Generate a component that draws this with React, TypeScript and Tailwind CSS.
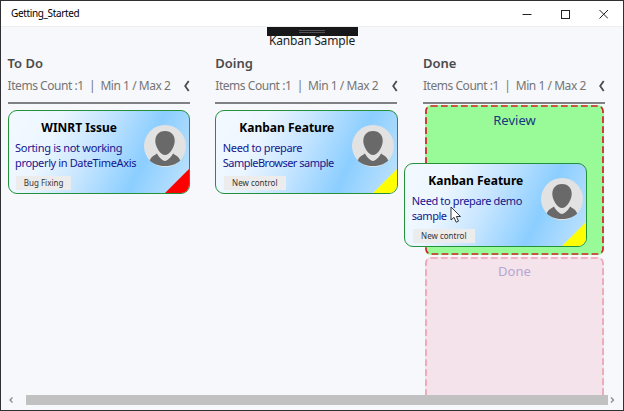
import type { ReactNode } from "react";

function Chevron() {
  return (
    <svg width="7" height="12" viewBox="0 0 7 12" fill="none" stroke="#4a4a4a" strokeWidth="1.8">
      <path d="M5.700 1 L2.200 6 L5.700 11" />
    </svg>
  );
}

function Avatar() {
  return (
    <svg width="42" height="42" viewBox="0 0 42 42" className="shrink-0">
      <circle cx="21" cy="21" r="21" fill="#e2e2e2" />
      <path d="M21 6 C14.5 6 11.3 10.5 11.3 16 C11.3 22 16.500 30 21 30 C25.500 30 30.7 22 30.7 16 C30.7 10.5 27.5 6 21 6Z" fill="#696969" />
      <path d="M12.800 28.500 C15 32 18.500 36 21 36 C23.500 36 27 32 29.200 28.500 C31.500 30.500 35 31.500 36.200 35.500 C32 39.500 27 41 21 41 C15 41 10 39.500 5.800 35.500 C7 31.500 10.500 30.500 12.800 28.500Z" fill="#696969" />
    </svg>
  );
}

type Line = { text: string; className: string };
type CardProps = { title: string; lines: Line[]; tag: string; tagClass: string; corner: string };

function Card({ title, lines, tag, tagClass, corner }: CardProps) {
  return (
    <div className="relative h-[84px] w-[182.500px] overflow-hidden rounded-[9px] border border-[#23913a] bg-[linear-gradient(115deg,#f4f9ff_0%,#ecf6ff_24%,#c6e5ff_46%,#8bceff_72%,#a0d6ff_82%,#c2e3fc_100%)]">
      <div className="flex justify-between pr-[3px] pl-[6.500px]">
        <div className="w-[128px]">
          <div className="mt-[8px] h-[18px] text-center text-[12px] leading-[18px] font-bold whitespace-nowrap text-black">{title}</div>
          <div className="mt-[2.500px] text-[11px] leading-[15px] whitespace-nowrap text-[#15158f]">
            {lines.map((l) => (
              <div key={l.text} className={l.className}>{l.text}</div>
            ))}
          </div>
          <div className={`mt-[6.500px] ml-px flex h-[14px] items-center justify-center bg-[#ececec] text-[8px] whitespace-nowrap text-[#333] ${tagClass}`}>{tag}</div>
        </div>
        <div className="pt-[14px]">
          <Avatar />
        </div>
      </div>
      <svg className="absolute right-[-1px] bottom-[-1px]" width="26" height="26" viewBox="0 0 26 26">
        <path d="M26 0 V26 H0Z" fill={corner} />
      </svg>
    </div>
  );
}

function Column({ title, children }: { title: string; children?: ReactNode }) {
  return (
    <section className="w-[182.500px] shrink-0">
      <h2 className="h-[20px] text-[13px] leading-[20px] font-semibold whitespace-nowrap text-[#4b4b4b]">{title}</h2>
      <div className="mt-[3px] flex h-[20px] items-center justify-between text-[#757575]">
        <span className="text-[12px] tracking-[-0.460px] whitespace-pre">{"Items Count :1  |  Min 1 / Max 2"}</span>
        <Chevron />
      </div>
      <div className="mt-[6px] h-[2px] w-[182px] bg-[#808184]" />
      {children}
    </section>
  );
}

function Zone({ label, className, stroke, height }: { label: string; className: string; stroke: string; height: number }) {
  return (
    <div className={`relative w-[179px] shrink-0 rounded-[6px] text-center text-[13px] leading-[20px] ${className}`}>
      <svg className="absolute top-0 left-0" width="179" height={height} fill="none">
        <rect x="1" y="1" width="177" height={height - 2} rx="5" stroke={stroke} strokeWidth="1.700" strokeDasharray="6.700 3.300" />
      </svg>
      {label}
    </div>
  );
}

export default function App() {
  return (
    <div className="flex h-[411px] w-[624px] flex-col overflow-hidden border border-[#303034] bg-[#f7f8fb] font-['Noto_Sans','Open_Sans',sans-serif]">
      <header className="flex h-[26px] shrink-0 items-center justify-between border-b border-[#eeeeef] bg-white pr-[15px] pl-[10px]">
        <span className="text-[10px] tracking-[-0.360px] text-black">Getting_Started</span>
        <svg width="86" height="12" viewBox="0 0 86 12" fill="none" stroke="#222" strokeWidth="1">
          <path d="M0.500 6.500 H9.500" />
          <rect x="39.500" y="2.500" width="8" height="8" />
          <path d="M77.500 2 L86 10.500 M86 2 L77.500 10.500" />
        </svg>
      </header>
      <div className="flex h-[26px] shrink-0 flex-col items-center">
        <div className="z-10 flex h-[9px] w-[91px] shrink-0 items-center justify-center bg-[#171719]">
          <div className="h-[3px] w-[26px] border-y border-[#515154]" />
        </div>
        <div className="-mt-[3px] text-[12px] leading-[16px] tracking-[-0.140px] whitespace-nowrap text-[#1c1c1c]">Kanban Sample</div>
      </div>
      <main className="flex h-[342px] shrink-0 gap-[25.200px] overflow-hidden pl-[6.600px]">
        <Column title="To Do">
          <div className="mt-[6px]">
            <Card title="WINRT Issue" lines={[{ text: "Sorting is not working", className: "tracking-[-0.300px]" }, { text: "properly in DateTimeAxis", className: "tracking-[-0.370px]" }]} tag="Bug Fixing" tagClass="w-[55px]" corner="#ff0000" />
          </div>
        </Column>
        <Column title="Doing">
          <div className="mt-[6px]">
            <Card title="Kanban Feature" lines={[{ text: "Need to prepare", className: "tracking-[-0.350px]" }, { text: "SampleBrowser sample", className: "tracking-[-0.520px]" }]} tag="New control" tagClass="w-[62px]" corner="#ffff00" />
          </div>
        </Column>
        <Column title="Done">
          <div className="relative mt-[1px] flex flex-col gap-[2px] pl-[2px]">
            <Zone label="Review" height={150} stroke="#d3202b" className="h-[150px] bg-[#98fb98] pt-[5px] text-[#15377f]" />
            <Zone label="Done" height={170} stroke="#eda3b0" className="h-[170px] bg-[#f4e3ea] pt-[4px] text-[#b5a6d3]" />
            <div className="absolute top-[58px] left-[-18.700px]">
              <Card title="Kanban Feature" lines={[{ text: "Need to prepare demo", className: "tracking-[-0.360px]" }, { text: "sample", className: "tracking-[-0.450px]" }]} tag="New control" tagClass="w-[62px]" corner="#ffff00" />
              <svg className="absolute top-[43px] left-[46px]" width="12" height="18" viewBox="0 0 12 18">
                <path d="M1 1 V14 L4 11.300 L6.200 16.200 L8.500 15.200 L6.400 10.500 H10.500Z" fill="#fff" stroke="#222" strokeWidth="0.9" />
              </svg>
            </div>
          </div>
        </Column>
      </main>
      <footer className="mx-[7px] flex h-[10px] shrink-0 items-center text-[#8a8a8a]">
        <svg width="18" height="10" viewBox="0 0 18 10" fill="none" stroke="currentColor" strokeWidth="1.3">
          <path d="M4.500 2.500 L2 5 L4.500 7.500" />
        </svg>
        <div className="h-full w-[582px] bg-[#c1c1c1]" />
        <svg width="8" height="10" viewBox="0 0 8 10" fill="none" stroke="currentColor" strokeWidth="1.3">
          <path d="M3 2.500 L5.500 5 L3 7.500" />
        </svg>
      </footer>
    </div>
  );
}
